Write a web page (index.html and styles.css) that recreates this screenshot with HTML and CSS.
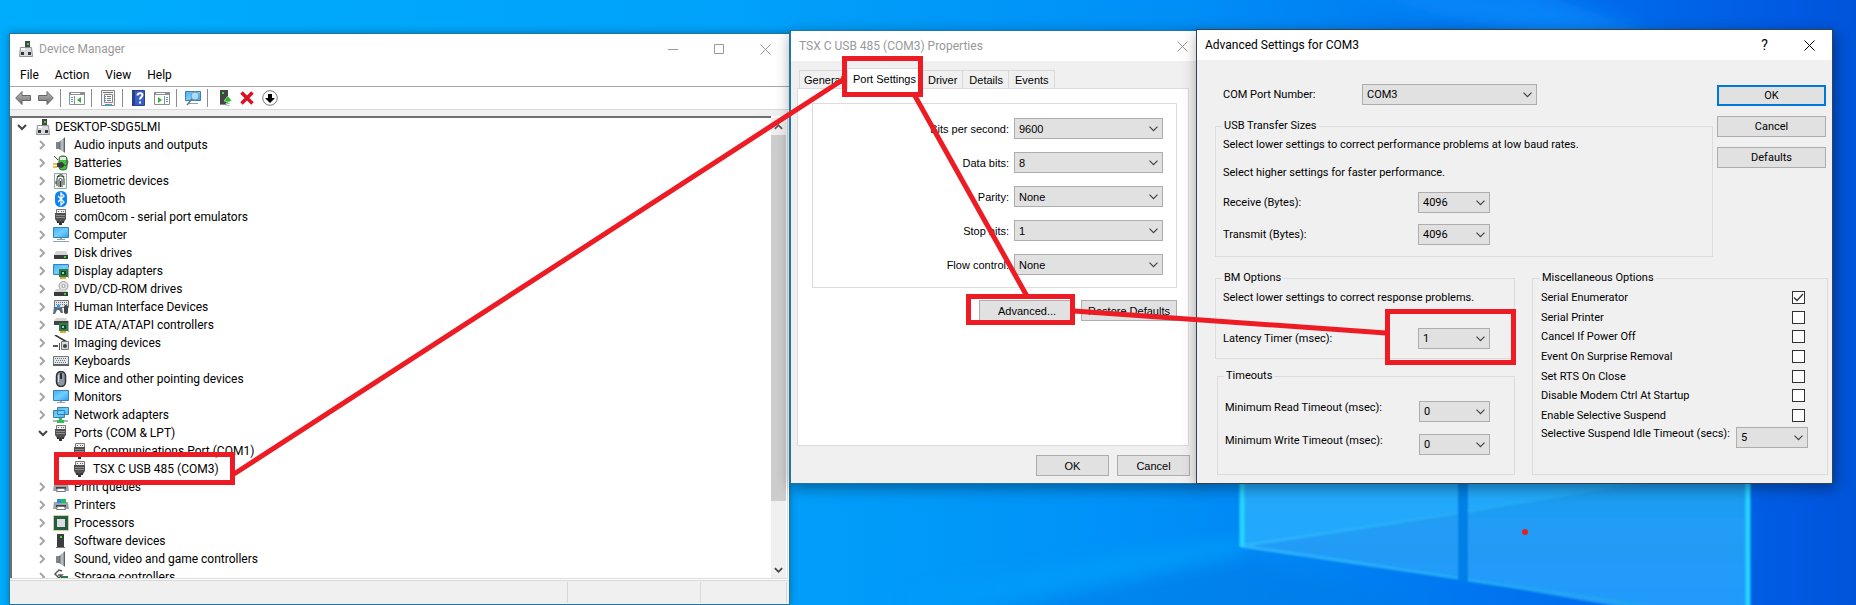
FILE: index.html
```
<!DOCTYPE html>
<html lang="en">
<head>
<meta charset="utf-8">
<title>Device Manager</title>
<link rel="stylesheet" href="styles.css">
</head>
<body>
<svg class="defs" aria-hidden="true">
  <defs>
    <linearGradient id="screen" x1="0" y1="0" x2="1" y2="1"><stop offset="0" stop-color="#3fb0f5"/><stop offset=".5" stop-color="#6fd0ff"/><stop offset="1" stop-color="#2f9ff0"/></linearGradient>
    <linearGradient id="metal" x1="0" y1="0" x2="0" y2="1"><stop offset="0" stop-color="#bdbdbd"/><stop offset="1" stop-color="#6e6e6e"/></linearGradient>
    <linearGradient id="cone" x1="0" y1="0" x2="1" y2="0"><stop offset="0" stop-color="#5c6468"/><stop offset=".5" stop-color="#c4cacd"/><stop offset="1" stop-color="#6b7377"/></linearGradient>
  </defs>
  <symbol id="i-pc" viewBox="0 0 16 16"><path fill="#454545" d="M7 0h5v7H7z"/><path fill="#2ee62e" d="M9 2h2v2H9z"/><path fill="#d9dade" stroke="#8e9196" d="M2.500 6.500h11l1 9h-13z" stroke-width="1"/><path fill="#fff" d="M3 7h4v2H3z"/><path fill="#33363a" d="M3 11h3v3H3zM10 11h3v3h-3z"/></symbol>
  <symbol id="i-audio" viewBox="0 0 16 16"><path fill="#7b858a" d="M3 5h3v7H3z"/><path fill="url(#cone)" d="M6 5l6-5v16l-6-4z"/><path fill="#596267" d="M11 1h1v14h-1z"/></symbol>
  <symbol id="i-battery" viewBox="0 0 16 16"><rect x="6" y="1" width="8" height="14" rx="3" fill="#3fc33f" stroke="#397239"/><path fill="#e4e9e4" d="M7 2h6v3H7z"/><path d="M1 1l4 4M13 5c3 0 2 5-1 6" stroke="#444" fill="none"/><path fill="#3c3c3c" d="M4 8l5-1 3 3-3 3-5-1z"/><path stroke="#d8b315" stroke-width="1.500" d="M0 9h4M0 12h4"/></symbol>
  <symbol id="i-finger" viewBox="0 0 16 16"><path fill="#f1f7f4" stroke="#8faca6" d="M1.500.500h12v15h-12z"/><g fill="none" stroke="#333"><path d="M4 13V6c0-4 7-4 7 0v6M6 14V7c0-2 3-2 3 0v7M7.500 8v6M3 8v3M4 4c2-3 6-3 7 0"/></g></symbol>
  <symbol id="i-bt" viewBox="0 0 16 16"><rect x="2" width="12" height="16" rx="5.500" fill="#0a84f5"/><path d="M5 5l6 6-3 3V2l3 3-6 6" fill="none" stroke="#fff" stroke-width="1.200"/></symbol>
  <symbol id="i-port" viewBox="0 0 16 16"><path fill="#eee" stroke="#777" d="M3.500.500h9v4h-9z"/><path fill="#666" d="M5 2h1v1H5zM8 2h1v1H8zM10 2h1v1h-1z"/><path fill="#505050" d="M2 4h11v6l-2 3H4l-2-3z"/><path stroke="#8c8c8c" d="M3 6.500h9M3 8.500h9"/><path fill="#333" d="M4 12h2v2H4zM9 12h2v2H9zM6 13h3v3H6z"/></symbol>
  <symbol id="i-monitor" viewBox="0 0 16 16"><path fill="url(#screen)" stroke="#3f7fae" d="M.500 1.500h15v10H.500z"/><path fill="#8da3b0" d="M7 12h2v1H7zM4 13h8v1H4z"/></symbol>
  <symbol id="i-computer" viewBox="0 0 16 16"><path fill="url(#screen)" stroke="#3f7fae" d="M.500.500h15v10H.500z"/><path fill="#8da3b0" d="M7 11h2v1H7zM4 12h8v1H4zM0 14h16v1H0z"/></symbol>
  <symbol id="i-disk" viewBox="0 0 16 16"><path fill="#d4d4d4" d="M3 6h10l2 4H1z"/><path fill="#3b3b3b" d="M1 10h14v4H1z"/><path fill="#35d435" d="M11 11h2v2h-2z"/></symbol>
  <symbol id="i-card" viewBox="0 0 16 16"><path fill="#2d7c4b" d="M6 6h9v8H6z"/><path fill="#15452a" d="M8 8h5v4H8z"/><path fill="#9bd8ad" d="M9 9h2v2H9z"/><path fill="#e9a52a" d="M7 14h6v2H7z"/><path fill="#aaa" d="M15 4h1v11h-1z"/></symbol>
  <symbol id="i-display" viewBox="0 0 16 16"><path fill="url(#screen)" stroke="#3f7fae" d="M.500 1.500h15v10H.500z"/><use href="#i-card"/></symbol>
  <symbol id="i-dvd" viewBox="0 0 16 16"><circle cx="10.500" cy="5" r="4.500" fill="#e2e2e2" stroke="#999"/><circle cx="10.500" cy="5" r="1.500" fill="#fff" stroke="#999"/><path fill="#d4d4d4" d="M3 8h8l4 3H1z"/><path fill="#3b3b3b" d="M1 11h14v4H1z"/><path fill="#35d435" d="M11 12h2v2h-2z"/></symbol>
  <symbol id="i-hid" viewBox="0 0 16 16"><path fill="#e3e6e9" stroke="#70777c" d="M1.500 1.500h14v7h-14z"/><path stroke="#70777c" stroke-dasharray="1 1" d="M3 3.500h11M3 5.500h11"/><path fill="#5c6b78" d="M1 8h8l1 6H8l-2-3H4l-2 4H0z"/><path fill="#2d9bf0" d="M4 6h3v3H4z"/><rect x="11" y="6" width="4" height="9" rx="2" fill="#3d444a"/></symbol>
  <symbol id="i-ide" viewBox="0 0 16 16"><path fill="#d4d4d4" d="M3 1h10l2 3H1z"/><path fill="#444" d="M1 4h14v4H1z"/><use href="#i-card"/></symbol>
  <symbol id="i-imaging" viewBox="0 0 16 16"><path d="M2 0l12 7" stroke="#333" stroke-width="1.500"/><path fill="#d9d9d9" stroke="#777" d="M8.500 6.500h7v8h-7z"/><circle cx="12" cy="11" r="2" fill="#444"/><path fill="#555" d="M0 10h5v2H0zM6 8h1v7H6z"/></symbol>
  <symbol id="i-keyboard" viewBox="0 0 16 16"><path fill="#e3e6e9" stroke="#70777c" d="M.500 3.500h15v9H.500z"/><path stroke="#70777c" stroke-dasharray="1 1" d="M2 5.500h12M3 7.500h10M2 9.500h12"/><path fill="#59626a" d="M0 11h16v2H0z"/></symbol>
  <symbol id="i-mouse" viewBox="0 0 16 16"><rect x="3.500" y=".500" width="9" height="15" rx="4.500" fill="#8c98a3" stroke="#2c2f33" stroke-width="1.500"/><path fill="#2c2f33" d="M7 2h2v6H7z"/><path stroke="#d7dde2" d="M5.500 4v7"/></symbol>
  <symbol id="i-network" viewBox="0 0 16 16"><path fill="url(#screen)" stroke="#3f7fae" d="M4.500.500h11v7h-11zM.500 3.500h11v7H.500z"/><path fill="#2fbf4d" d="M6 11h3v2h2v3H4v-3h2z"/><path fill="#aeb6ba" d="M0 13h4v2H0zM11 13h4v2h-4z"/></symbol>
  <symbol id="i-printer" viewBox="0 0 16 16"><path fill="#555b60" d="M4 3h9v4H4z"/><path fill="#9da4a9" d="M1 5h14l1 7H0z"/><path fill="#3d4246" d="M3 8h10v2H3z"/><path fill="#fff" stroke="#777" d="M4.500 9.500h7l1 3h-9z"/></symbol>
  <symbol id="i-printc" viewBox="0 0 16 16"><use href="#i-printer"/><path fill="#2b8ce8" d="M4 2h4v4H4z"/><path fill="#1bbf5c" d="M8 2h5v4H8z"/></symbol>
  <symbol id="i-cpu" viewBox="0 0 16 16"><path fill="none" stroke="#b29a45" stroke-dasharray="1 1" d="M.500.500h15v15H.500z"/><path fill="#225c41" d="M1 1h14v14H1z"/><path fill="#dcdcdc" d="M4 4h8v8H4z"/></symbol>
  <symbol id="i-soft" viewBox="0 0 16 16"><path fill="#3c3c3c" d="M4 1h7v13H4z"/><path fill="#2ee62e" d="M7 3h2v2H7z"/><path fill="#777" d="M3 14h9v1H3z"/></symbol>
  <symbol id="i-storage" viewBox="0 0 16 16"><path fill="none" stroke="#555" stroke-width="1.500" d="M9 2L6 1 2 5l4 4 3-3H5"/><path fill="#2d7c4b" d="M8 7h7v6H8z"/><path fill="#aaa" d="M4 9h5v4H4z"/></symbol>
  <symbol id="i-back" viewBox="0 0 16 16"><path fill="url(#metal)" stroke="#666" d="M.700 8L7 1.500v4h8.500v5H7v4z"/></symbol>
  <symbol id="i-fwd" viewBox="0 0 16 16"><path fill="url(#metal)" stroke="#666" d="M15.300 8L9 1.500v4H.500v5H9v4z"/></symbol>
  <symbol id="i-pane" viewBox="0 0 16 16"><path fill="#fff" stroke="#8a9096" d="M.500 2.500h15v12H.500z"/><path fill="#8a9096" d="M0 2h16v3H0zM5 6h1v9H5z"/><path stroke="#fff" d="M2 3.500h9"/><path stroke="#4f93cf" d="M2 7.500h2M2 9.500h2M2 11.500h2"/><path fill="#34b233" d="M12 7v6L8 10z"/></symbol>
  <symbol id="i-play" viewBox="0 0 16 16"><path fill="#fff" stroke="#8a9096" d="M.500 2.500h15v12H.500z"/><path fill="#8a9096" d="M0 2h16v3H0zM10 6h1v9h-1z"/><path stroke="#fff" d="M2 3.500h9"/><path stroke="#4f93cf" d="M12 7.500h2M12 9.500h2M12 11.500h2"/><path fill="#34b233" d="M4 7v6l4-3z"/></symbol>
  <symbol id="i-props" viewBox="0 0 16 16"><path fill="#f4f4f4" stroke="#85898d" d="M1.500.500h13v15h-13z"/><path fill="#fff" stroke="#85898d" d="M4.500 4.500h8v8h-8z"/><path stroke="#777" d="M7 6.500h4M7 8.500h4M7 10.500h4M3 2.500h10"/><path stroke="#35a4df" d="M5 6.500h1M5 8.500h1M5 10.500h1M5 14.500h7"/></symbol>
  <symbol id="i-help" viewBox="0 0 16 16"><path fill="#3b5fc4" stroke="#27408b" d="M1.500.500h12v15h-12z"/><path fill="#27408b" d="M1 0h3v16H1z"/><path fill="none" stroke="#fff" stroke-width="2" d="M6.500 5.500c0-3 5-3 5-.500 0 2-2.500 2-2.500 4.500M9 11.500v2"/></symbol>
  <symbol id="i-scan" viewBox="0 0 16 16"><path fill="url(#screen)" stroke="#3f7fae" d="M.500 1.500h15v9H.500z"/><path fill="#8da3b0" d="M4 13h9v1H4z"/><circle cx="10" cy="6" r="4" fill="#a9dcfa" stroke="#7d98a8"/><path stroke="#657985" stroke-width="1.500" d="M7 9l-5 6"/></symbol>
  <symbol id="i-update" viewBox="0 0 16 16"><path fill="#444" d="M4 0h8v14H4z"/><path fill="#2ee62e" d="M6 2h2v2H6z"/><path fill="#888" d="M4 14h7v1H4z"/><path fill="#28b828" stroke="#fff" stroke-width=".500" d="M12 6l4 5h-2v1h-4v-1H8zM10 13h4v1h-4zM10 15h4v1h-4z"/></symbol>
  <symbol id="i-remove" viewBox="0 0 16 16"><path stroke="#dd1020" stroke-width="3.500" d="M2.500 2.500l11 11M13.500 2.500l-11 11"/></symbol>
  <symbol id="i-disable" viewBox="0 0 16 16"><circle cx="8" cy="8" r="7.300" fill="#fff" stroke="#777"/><path d="M6 4h4v4h3l-5 5-5-5h3z"/></symbol>
  <symbol id="i-right" viewBox="0 0 8 10"><path fill="none" stroke="#a6a6a6" stroke-width="2" d="M2 1l4 4-4 4"/></symbol>
  <symbol id="i-down" viewBox="0 0 10 8"><path fill="none" stroke="#444" stroke-width="2" d="M1 2l4 4 4-4"/></symbol>
  <symbol id="i-up" viewBox="0 0 10 8"><path fill="none" stroke="#555" stroke-width="2" d="M1 6l4-4 4 4"/></symbol>
  <symbol id="i-close" viewBox="0 0 11 11"><path fill="none" stroke="currentColor" d="M.500.500l10 10M10.500.500l-10 10"/></symbol>
  <symbol id="i-max" viewBox="0 0 11 11"><path fill="none" stroke="currentColor" d="M.500.500h9v9h-9z"/></symbol>
  <symbol id="i-min" viewBox="0 0 11 11"><path stroke="currentColor" d="M0 5.500h10"/></symbol>
</svg>

<main class="desktop">
  <svg class="wallpaper" viewBox="0 0 1856 605" preserveAspectRatio="none" aria-hidden="true">
    <defs>
      <linearGradient id="w1" x1="0" y1="0" x2="0" y2="1"><stop offset="0" stop-color="#1e9ef0"/><stop offset="1" stop-color="#2499ff"/></linearGradient>
      <linearGradient id="w2" x1="0" y1="0" x2="1" y2="0"><stop offset="0" stop-color="#2fb5ff"/><stop offset="1" stop-color="#1ea4ee"/></linearGradient>
      <linearGradient id="ray" x1="0" y1="0" x2="1" y2="0"><stop offset="0" stop-color="#00b4ff" stop-opacity="0"/><stop offset="1" stop-color="#00b4ff" stop-opacity=".5"/></linearGradient>
      <filter id="soft"><feGaussianBlur stdDeviation="1"/></filter>
      <filter id="softer"><feGaussianBlur stdDeviation="9"/></filter>
    </defs>
    <path fill="#007be6" opacity=".6" filter="url(#softer)" d="M960 620l281-62 240 62z"/>
    <path fill="url(#ray)" filter="url(#softer)" d="M900 590l341-50v12L900 620z"/>
    <path fill="#0a90ff" opacity=".6" filter="url(#softer)" d="M1340-10h190l170 60h-120z"/>
    <g filter="url(#soft)">
      <path fill="url(#w1)" d="M1241 470h217v109l-217-33zM1468 470h280v160l-280-50z"/>
      <path fill="#22aeff" opacity=".7" d="M1241 470h217v43l-217 33zM1468 470h240l-240 41z"/>
      <path fill="#0380e6" d="M1458 470h10v112l-10-2z"/>
      <path fill="none" stroke="url(#w2)" stroke-width="3" d="M1241 546l217-33M1468 511l180-30M1241 546l217 32M1468 580l190 28"/>
      <path fill="none" stroke="#27d5ff" stroke-width="5" d="M1242 470v77M1748 470v140"/>
    </g>
    <ellipse fill="#ed1c24" cx="1525" cy="532" rx="3" ry="3"/>
  </svg>

  <section class="window manager" aria-label="Device Manager">
    <header class="titlebar inactive">
      <svg class="ico"><use href="#i-pc"/></svg>
      <h1>Device Manager</h1>
      <button class="cap" aria-label="Minimize"><svg><use href="#i-min"/></svg></button>
      <button class="cap" aria-label="Maximize"><svg><use href="#i-max"/></svg></button>
      <button class="cap" aria-label="Close"><svg><use href="#i-close"/></svg></button>
    </header>
    <nav class="menubar"><button>File</button><button>Action</button><button>View</button><button>Help</button></nav>
    <div class="toolbar">
      <button aria-label="Back"><svg class="ico"><use href="#i-back"/></svg></button>
      <button aria-label="Forward"><svg class="ico"><use href="#i-fwd"/></svg></button>
      <i class="sep"></i>
      <button aria-label="Console tree"><svg class="ico"><use href="#i-pane"/></svg></button>
      <i class="sep"></i>
      <button aria-label="Properties"><svg class="ico"><use href="#i-props"/></svg></button>
      <i class="sep"></i>
      <button aria-label="Help"><svg class="ico"><use href="#i-help"/></svg></button>
      <button aria-label="Action pane"><svg class="ico"><use href="#i-play"/></svg></button>
      <i class="sep"></i>
      <button aria-label="Scan for changes"><svg class="ico"><use href="#i-scan"/></svg></button>
      <i class="sep"></i>
      <button aria-label="Update driver"><svg class="ico"><use href="#i-update"/></svg></button>
      <button aria-label="Uninstall"><svg class="ico"><use href="#i-remove"/></svg></button>
      <button aria-label="Disable"><svg class="ico"><use href="#i-disable"/></svg></button>
    </div>
    <div class="treebox">
      <ul class="tree">
        <li class="root"><svg class="down"><use href="#i-down"/></svg><svg class="ico"><use href="#i-pc"/></svg>DESKTOP-SDG5LMI</li>
        <li><svg class="right"><use href="#i-right"/></svg><svg class="ico"><use href="#i-audio"/></svg>Audio inputs and outputs</li>
        <li><svg class="right"><use href="#i-right"/></svg><svg class="ico"><use href="#i-battery"/></svg>Batteries</li>
        <li><svg class="right"><use href="#i-right"/></svg><svg class="ico"><use href="#i-finger"/></svg>Biometric devices</li>
        <li><svg class="right"><use href="#i-right"/></svg><svg class="ico"><use href="#i-bt"/></svg>Bluetooth</li>
        <li><svg class="right"><use href="#i-right"/></svg><svg class="ico"><use href="#i-port"/></svg>com0com - serial port emulators</li>
        <li><svg class="right"><use href="#i-right"/></svg><svg class="ico"><use href="#i-computer"/></svg>Computer</li>
        <li><svg class="right"><use href="#i-right"/></svg><svg class="ico"><use href="#i-disk"/></svg>Disk drives</li>
        <li><svg class="right"><use href="#i-right"/></svg><svg class="ico"><use href="#i-display"/></svg>Display adapters</li>
        <li><svg class="right"><use href="#i-right"/></svg><svg class="ico"><use href="#i-dvd"/></svg>DVD/CD-ROM drives</li>
        <li><svg class="right"><use href="#i-right"/></svg><svg class="ico"><use href="#i-hid"/></svg>Human Interface Devices</li>
        <li><svg class="right"><use href="#i-right"/></svg><svg class="ico"><use href="#i-ide"/></svg>IDE ATA/ATAPI controllers</li>
        <li><svg class="right"><use href="#i-right"/></svg><svg class="ico"><use href="#i-imaging"/></svg>Imaging devices</li>
        <li><svg class="right"><use href="#i-right"/></svg><svg class="ico"><use href="#i-keyboard"/></svg>Keyboards</li>
        <li><svg class="right"><use href="#i-right"/></svg><svg class="ico"><use href="#i-mouse"/></svg>Mice and other pointing devices</li>
        <li><svg class="right"><use href="#i-right"/></svg><svg class="ico"><use href="#i-monitor"/></svg>Monitors</li>
        <li><svg class="right"><use href="#i-right"/></svg><svg class="ico"><use href="#i-network"/></svg>Network adapters</li>
        <li><svg class="down"><use href="#i-down"/></svg><svg class="ico"><use href="#i-port"/></svg>Ports (COM &amp; LPT)</li>
        <li class="leaf"><svg class="ico"><use href="#i-port"/></svg>Communications Port (COM1)</li>
        <li class="leaf"><svg class="ico"><use href="#i-port"/></svg>TSX C USB 485 (COM3)</li>
        <li><svg class="right"><use href="#i-right"/></svg><svg class="ico"><use href="#i-printer"/></svg>Print queues</li>
        <li><svg class="right"><use href="#i-right"/></svg><svg class="ico"><use href="#i-printc"/></svg>Printers</li>
        <li><svg class="right"><use href="#i-right"/></svg><svg class="ico"><use href="#i-cpu"/></svg>Processors</li>
        <li><svg class="right"><use href="#i-right"/></svg><svg class="ico"><use href="#i-soft"/></svg>Software devices</li>
        <li><svg class="right"><use href="#i-right"/></svg><svg class="ico"><use href="#i-audio"/></svg>Sound, video and game controllers</li>
        <li><svg class="right"><use href="#i-right"/></svg><svg class="ico"><use href="#i-storage"/></svg>Storage controllers</li>
      </ul>
      <div class="scrollbar">
        <svg class="arrow"><use href="#i-up"/></svg>
        <div class="track"><div class="thumb"></div></div>
        <svg class="arrow"><use href="#i-down"/></svg>
      </div>
    </div>
    <footer class="status"><span></span><span></span><span></span></footer>
  </section>

  <section class="window properties" aria-label="TSX C USB 485 (COM3) Properties">
    <header class="titlebar inactive">
      <h2>TSX C USB 485 (COM3) Properties</h2>
      <button class="cap" aria-label="Close"><svg><use href="#i-close"/></svg></button>
    </header>
    <div class="tabs" role="tablist">
      <button role="tab">General</button><button role="tab" class="on" aria-selected="true">Port Settings</button><button role="tab">Driver</button><button role="tab">Details</button><button role="tab">Events</button>
    </div>
    <div class="panel">
      <div class="portform">
        <label for="bps">Bits per second:</label><select id="bps"><option>9600</option></select>
        <label for="data">Data bits:</label><select id="data"><option>8</option></select>
        <label for="parity">Parity:</label><select id="parity"><option>None</option></select>
        <label for="stop">Stop bits:</label><select id="stop"><option>1</option></select>
        <label for="flow">Flow control:</label><select id="flow"><option>None</option></select>
      </div>
      <div class="actions"><button class="btn">Advanced...</button><button class="btn">Restore Defaults</button></div>
    </div>
    <footer class="dialogend"><button class="btn">OK</button><button class="btn">Cancel</button></footer>
  </section>

  <section class="window advanced" aria-label="Advanced Settings for COM3">
    <header class="titlebar">
      <h2>Advanced Settings for COM3</h2>
      <button class="cap ask" aria-label="Help">?</button>
      <button class="cap" aria-label="Close"><svg><use href="#i-close"/></svg></button>
    </header>
    <div class="advbody">
      <div class="upper">
        <div class="main">
          <div class="comrow"><label for="com">COM Port Number:</label><select id="com"><option>COM3</option></select></div>
          <fieldset class="usb">
            <legend>USB Transfer Sizes</legend>
            <p>Select lower settings to correct performance problems at low baud rates.</p>
            <p>Select higher settings for faster performance.</p>
            <div class="row"><label for="rx">Receive (Bytes):</label><select id="rx"><option>4096</option></select></div>
            <div class="row"><label for="tx">Transmit (Bytes):</label><select id="tx"><option>4096</option></select></div>
          </fieldset>
        </div>
        <div class="side"><button class="btn default">OK</button><button class="btn">Cancel</button><button class="btn">Defaults</button></div>
      </div>
      <div class="lower">
        <div class="left">
          <fieldset class="bm">
            <legend>BM Options</legend>
            <p>Select lower settings to correct response problems.</p>
            <div class="row"><label for="lat">Latency Timer (msec):</label><select id="lat"><option>1</option></select></div>
          </fieldset>
          <fieldset class="timeouts">
            <legend>Timeouts</legend>
            <div class="row top"><label for="rt">Minimum Read Timeout (msec):</label><select id="rt"><option>0</option></select></div>
            <div class="row top"><label for="wt">Minimum Write Timeout (msec):</label><select id="wt"><option>0</option></select></div>
          </fieldset>
        </div>
        <fieldset class="misc">
          <legend>Miscellaneous Options</legend>
          <div class="checks">
            <label>Serial Enumerator<input type="checkbox" checked></label>
            <label>Serial Printer<input type="checkbox"></label>
            <label>Cancel If Power Off<input type="checkbox"></label>
            <label>Event On Surprise Removal<input type="checkbox"></label>
            <label>Set RTS On Close<input type="checkbox"></label>
            <label>Disable Modem Ctrl At Startup<input type="checkbox"></label>
            <label>Enable Selective Suspend<input type="checkbox"></label>
          </div>
          <div class="idle"><label for="idle">Selective Suspend Idle Timeout (secs):</label><select id="idle"><option>5</option></select></div>
        </fieldset>
      </div>
    </div>
  </section>

  <svg class="marks" viewBox="0 0 1856 605" aria-hidden="true">
    <g fill="none" stroke="#ed1c24" stroke-width="5">
      <path d="M56.500 454.500h176v28h-176zM844.500 58.500h76v36h-76zM968.500 296.500h104v26h-104zM1387.500 311.500h126v51h-126z"/>
      <path d="M234 474L844 79M915 96l113 202M1074 311l312 22"/>
    </g>
  </svg>
</main>
</body>
</html>
```
FILE: styles.css
```
* { box-sizing: border-box; }
body {
  margin: 0;
  font: 12px/18px Roboto, "Open Sans", sans-serif;
  color: #000;
}
button, select, input { font: inherit; color: inherit; margin: 0; }
button { padding: 0; border: 0; background: none; }
h1, h2, p, ul { margin: 0; padding: 0; font-size: inherit; font-weight: 400; }
svg { display: block; flex: none; }
.defs { position: absolute; width: 0; height: 0; }
.ico { width: 16px; height: 16px; }

.desktop {
  position: relative;
  height: 100vh;
  overflow: hidden;
  background:
    linear-gradient(100deg, rgba(0, 168, 255, 0) 30%, rgba(0, 150, 255, .2) 60%, rgba(0, 130, 255, 0) 75%),
    linear-gradient(90deg, #00acfc 0%, #00a2fa 40%, #008ff6 62%, #006fee 84%, #0059e2 97%, #0054d8 100%);
}
.wallpaper, .marks { position: absolute; inset: 0; width: 100%; height: 100%; pointer-events: none; }

/* Windows */
.window {
  position: absolute;
  display: flex;
  flex-direction: column;
  border: 1px solid #1f76a6;
  background: #f0f0f0;
  box-shadow: 2px 4px 14px rgba(0, 0, 0, .4);
}
.manager { left: 9px; top: 33px; bottom: 0; width: 781px; background: #fff; box-shadow: 0 0 8px rgba(0, 0, 0, .3); }
.properties { left: 789px; top: 30px; width: 410px; border-left-width: 2px; }
.advanced { left: 1196px; top: 29px; width: 637px; border-color: #2d4458; }

.titlebar { display: flex; align-items: center; height: 30px; padding-left: 8px; background: #fff; }
.titlebar h1, .titlebar h2 { flex: 1; }
.inactive { color: #999; }
.cap { display: grid; place-items: center; width: 46px; height: 100%; }
.cap svg { width: 11px; height: 11px; }
.manager .titlebar .ico { margin: 0 5px 0 0; }
.manager .titlebar { padding-right: 1px; }

/* Device manager */
.menubar { display: flex; gap: 16px; height: 23px; padding-left: 10px; border-bottom: 1px solid #a8a8a8; }
.toolbar { display: flex; align-items: center; gap: 7px; height: 23px; padding-left: 5px; border-bottom: 1px solid #d9d9d9; }
.sep { width: 1px; height: 18px; margin: 0 1px 0 -1px; background: #8d8d8d; }
.treebox {
  flex: 1;
  display: flex;
  min-height: 0;
  margin-right: 1px;
  border-top: 6px solid #f0f0f0;
  border-bottom: 1px solid #dcdcdc;
  border-right: 1px solid #dcdcdc;
}
.tree { flex: 1; overflow: hidden; border: 2px solid #6f6f6f; border-width: 2px 0 0 2px; list-style: none; }
.tree li { display: flex; align-items: center; height: 18px; padding-left: 26px; }
.tree .root { padding-left: 5px; }
.tree .leaf { padding-left: 60px; }
.tree .ico { margin-right: 5px; }
.tree .root .ico { margin-right: 4px; }
.down { width: 10px; height: 8px; margin-right: 5px; }
.root .down { margin-right: 8px; }
.right { width: 8px; height: 10px; margin-right: 7px; }
.scrollbar { display: flex; flex-direction: column; align-items: center; width: 15px; margin: 2px 1px 0 0; background: #f0f0f0; }
.arrow { width: 9px; height: 8px; margin: 5px 0 4px; }
.track { flex: 1; width: 100%; }
.thumb { height: 86%; background: #cdcdcd; }
.status { display: grid; grid-template-columns: 1fr 133px 86px; height: 24px; margin-top: 1px; padding: 1px 2px 1px 0; border-top: 1px solid #d7d7d7; background: #f0f0f0; }
.status span { border-right: 1px solid #d7d7d7; }

/* Shared controls */
.properties, .advanced .advbody { font-size: 11px; line-height: 14px; }
.properties .titlebar { font-size: 12px; }
.btn { height: 21px; border: 1px solid #adadad; background: #e1e1e1; }
.default { border: 2px solid #0078d7; }
select {
  appearance: none;
  height: 21px;
  padding: 0 4px;
  border: 1px solid #adadad;
  border-radius: 0;
  background: #e1e1e1 url("data:image/svg+xml,%3Csvg xmlns='http://www.w3.org/2000/svg' width='9' height='6'%3E%3Cpath d='M.5.7l4 4 4-4' fill='none' stroke='%23444' stroke-width='1.2'/%3E%3C/svg%3E") no-repeat right 4px center;
}

/* Properties */
.properties { font-family: "Liberation Sans", Arial, sans-serif; }
.properties .titlebar { font-family: Roboto, sans-serif; }
.properties .cap { width: 32px; }
.tabs { display: flex; align-items: flex-end; height: 27px; padding-left: 8px; }
.tabs button { height: 18px; padding: 0 5px 0 6px; border: 1px solid #d9d9d9; border-width: 1px 1px 0 0; }
.tabs button:first-child { width: 49px; padding-left: 4px; border-left-width: 1px; text-align: left; }
.tabs .on { position: relative; height: 21px; width: 74px; margin-bottom: -1px; padding: 0; background: #fff; }
.panel { margin: 0 9px 0 6px; padding: 14px 11px 124px 14px; border: 1px solid #dcdcdc; background: #fff; }
.portform {
  display: grid;
  grid-template-columns: 1fr 149px;
  gap: 13px 5px;
  align-items: center;
  padding: 14px 13px 12px;
  border: 1px solid #dcdcdc;
}
.portform label { text-align: right; }
.actions { display: flex; justify-content: flex-end; gap: 6px; margin-top: 12px; }
.actions .btn { width: 96px; }
.dialogend { display: flex; justify-content: flex-end; gap: 8px; padding: 9px 8px 7px; }
.dialogend .btn { width: 73px; }

/* Advanced settings */
.advanced .cap { width: 45px; }
.advanced .ask { font-size: 14px; }
.advbody { padding: 24px 4px 8px 18px; }
.upper { display: flex; gap: 4px; }
.main { flex: 1; }
.side { display: flex; flex-direction: column; gap: 10px; width: 109px; margin: 1px 2px 0 0; }
.comrow { display: grid; grid-template-columns: 139px 175px; padding-left: 8px; align-items: center; margin-bottom: 14px; }
fieldset { min-width: 0; margin: 0; padding: 0 7px; border: 1px solid #dcdcdc; }
legend { margin-left: -1px; padding: 0 2px; }
.row { display: grid; grid-template-columns: 195px 72px; align-items: center; }
.row.top { grid-template-columns: 194px 71px; align-items: start; }
.usb { padding: 5px 7px 11px; }
.usb p { margin-bottom: 14px; }
.usb p + .row { margin: -2px 0 11px; }
.lower { display: flex; justify-content: space-between; gap: 17px; margin-top: 14px; }
.left { flex: 1; }
.bm { padding: 6px 7px 9px; }
.bm p { margin-bottom: 23px; }
.timeouts { margin: 10px 0 0 2px; padding: 18px 7px 19px; }
.timeouts .row + .row { margin-top: 12px; }
.misc { width: 296px; padding: 6px 19px 26px 8px; }
.checks { display: flex; flex-direction: column; justify-content: space-between; height: 132px; }
.checks label { display: flex; justify-content: space-between; padding-right: 3px; }
.checks input { appearance: none; width: 13px; height: 13px; border: 1px solid #333; background: #fff; }
.checks input:checked { background: #fff url("data:image/svg+xml,%3Csvg xmlns='http://www.w3.org/2000/svg' width='11' height='11'%3E%3Cpath d='M1 5.5l3 3 6-6.500' fill='none' stroke='%23333' stroke-width='1.3'/%3E%3C/svg%3E"); }
.idle { display: flex; justify-content: space-between; margin-top: 4px; }
.idle select { width: 72px; }
```
